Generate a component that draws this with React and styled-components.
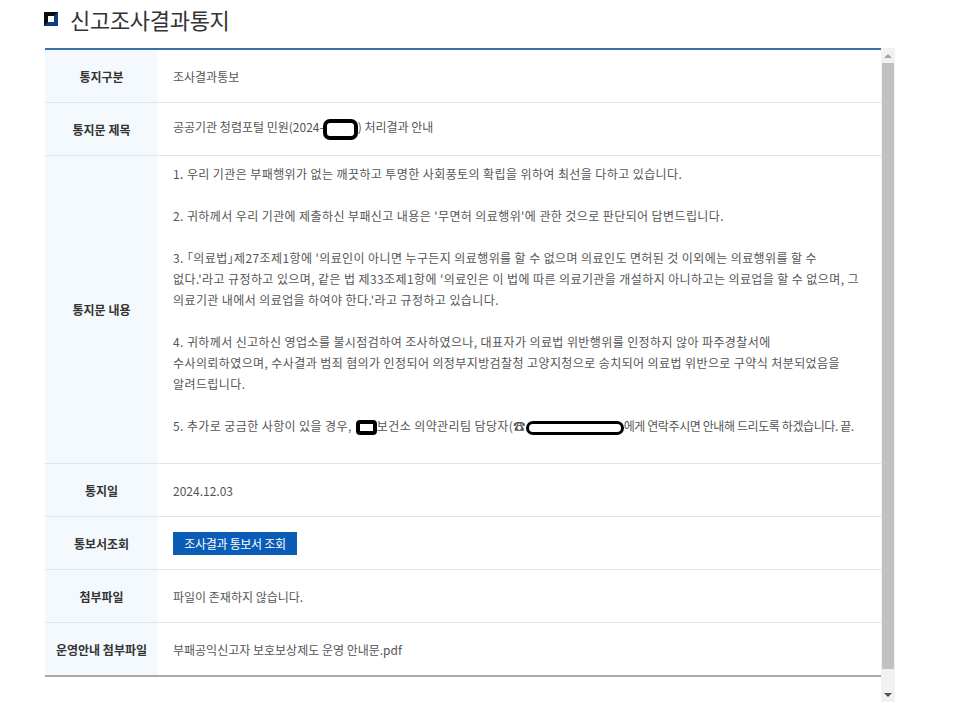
import React from 'react'
import styled, { createGlobalStyle } from 'styled-components'

const GlobalStyle = createGlobalStyle`
  body {
    margin:      0;
    background:  #fff;
    font-family: "Noto Sans CJK KR", "Noto Sans", sans-serif;
    color:       #333;
  }
`

const rows = [
  { label: '통지구분', value: '조사결과통보' },
  { label: '통지문 제목', value: 'title' },
  { label: '통지문 내용', value: 'content' },
  { label: '통지일', value: '2024.12.03' },
  { label: '통보서조회', value: 'button' },
  { label: '첨부파일', value: '파일이 존재하지 않습니다.' },
  { label: '운영안내 첨부파일', value: '부패공익신고자 보호보상제도 운영 안내문.pdf' },
]

const paragraphs = [
  ['1. 우리 기관은 부패행위가 없는 깨끗하고 투명한 사회풍토의 확립을 위하여 최선을 다하고 있습니다.'],
  ["2. 귀하께서 우리 기관에 제출하신 부패신고 내용은 '무면허 의료행위'에 관한 것으로 판단되어 답변드립니다."],
  [
    "3. ｢의료법｣제27조제1항에 '의료인이 아니면 누구든지 의료행위를 할 수 없으며 의료인도 면허된 것 이외에는 의료행위를 할 수",
    "없다.'라고 규정하고 있으며, 같은 법 제33조제1항에 '의료인은 이 법에 따른 의료기관을 개설하지 아니하고는 의료업을 할 수 없으며, 그",
    "의료기관 내에서 의료업을 하여야 한다.'라고 규정하고 있습니다.",
  ],
  [
    '4. 귀하께서 신고하신 영업소를 불시점검하여 조사하였으나, 대표자가 의료법 위반행위를 인정하지 않아 파주경찰서에',
    '수사의뢰하였으며, 수사결과 범죄 혐의가 인정되어 의정부지방검찰청 고양지청으로 송치되어 의료법 위반으로 구약식 처분되었음을',
    '알려드립니다.',
  ],
]

const App = () => {
  const renderValue = (value) => {
    if (value === 'title') {
      return (
        <span>
          공공기관 청렴포털 민원(2024-<Redact $w={35} $h={21} $b={4} $r={7} $ml={-1} />) 처리결과 안내
        </span>
      )
    }
    if (value === 'button') {
      return <ViewButton type="button">조사결과 통보서 조회</ViewButton>
    }
    if (value === 'content') {
      return (
        <Content>
          {paragraphs.map((lines, i) => (
            <Paragraph key={i}>
              {lines.map((line, j) => (
                <Line key={j}>{line}</Line>
              ))}
            </Paragraph>
          ))}
          <Paragraph>
            <Line>
              5. 추가로 궁금한 사항이 있을 경우, <Redact $w={21} $h={15} $b={4} $r={4} $ml={1} />보건소 의약관리팀 담당자(☎<Redact $w={98} $h={14} $b={3} $r={7} $ml={0} />
              <Tail>에게 연락주시면 안내해 드리도록 하겠습니다. 끝.</Tail>
            </Line>
          </Paragraph>
        </Content>
      )
    }
    return value
  }

  return (
    <Page>
      <GlobalStyle />
      <Title>
        <TitleIcon />
        신고조사결과통지
      </Title>
      <Frame>
        <Board>
          {rows.map((row, i) => (
            <Row key={row.label} $last={i === rows.length - 1}>
              <Label>{row.label}</Label>
              <Value $content={row.value === 'content'}>{renderValue(row.value)}</Value>
            </Row>
          ))}
        </Board>
        <Scrollbar>
          <ScrollButton>
            <Arrow $dir="up" />
          </ScrollButton>
          <Track>
            <Thumb />
          </Track>
          <ScrollButton>
            <Arrow $dir="down" />
          </ScrollButton>
        </Scrollbar>
      </Frame>
    </Page>
  )
}

const Page = styled.div`
  padding:          0 0 0 44px;
  width:            851px;
`

const Title = styled.h2`
  display:          flex;
  align-items:      center;
  gap:              12px;
  height:           38px;
  margin:           0 0 10px;
  font-size:        22px;
  font-weight:      400;
  color:            #333;
  letter-spacing:   -0.3px;
`

const TitleIcon = styled.span`
  box-sizing:       border-box;
  width:            14px;
  height:           14px;
  border:           4px solid #0e3f82;
  border-top-color: #0a0a14;
  border-left-color:#0a0a14;
  background:       #fff;
`

const Frame = styled.div`
  display:          flex;
  height:           654px;
  margin-left:      1px;
`

const Board = styled.div`
  flex:             1;
  align-self:       flex-start;
  border-top:       2px solid #3a6faa;
`

const Row = styled.div`
  display:          grid;
  grid-template-columns: 113px 1fr;
  border-bottom:    ${p => (p.$last ? '2px solid #aaa' : '1px solid #e4e4e4')};
`

const Label = styled.div`
  display:          flex;
  align-items:      center;
  justify-content:  center;
  min-height:       52px;
  background:       #f4f9fd;
  font-size:        12px;
  font-weight:      700;
  color:            #333;
  white-space:      nowrap;
`

const Value = styled.div`
  display:          flex;
  align-items:      center;
  padding:          ${p => (p.$content ? '7px 15px 6px' : '0 15px')};
  font-size:        12px;
  color:            #555;
`

const Content = styled.div`
  line-height:      21px;
  padding-bottom:   21px;
  letter-spacing:   0.4px;
`

const Paragraph = styled.div`
  & + & {
    margin-top:     21px;
  }
`

const Line = styled.div`
  white-space:      nowrap;
`

const Tail = styled.span`
  letter-spacing:   -0.4px;
`

const Redact = styled.span`
  display:          inline-block;
  box-sizing:       border-box;
  width:            ${p => p.$w}px;
  height:           ${p => p.$h}px;
  border:           ${p => p.$b}px solid #000;
  border-radius:    ${p => p.$r}px;
  margin-left:      ${p => p.$ml}px;
  vertical-align:   middle;
  background:       #fff;
`

const ViewButton = styled.button`
  height:           23px;
  width:            124px;
  padding:          0;
  border:           0;
  background:       #0b5cb6;
  color:            #fff;
  font-family:      inherit;
  font-size:        12px;
  letter-spacing:   -0.3px;
`

const Scrollbar = styled.div`
  display:          flex;
  flex-direction:   column;
  width:            14px;
  background:       #f1f1f1;
`

const ScrollButton = styled.div`
  display:          flex;
  align-items:      center;
  justify-content:  center;
  height:           15px;
`

const Track = styled.div`
  flex:             1;
  padding:          0 1px 18px;
  display:          flex;
`

const Thumb = styled.div`
  flex:             1;
  background:       #c1c1c1;
`

const Arrow = styled.span`
  width:            0;
  height:           0;
  border-left:      4px solid transparent;
  border-right:     4px solid transparent;
  ${p => (p.$dir === 'up'
    ? 'border-bottom: 4px solid #a3a3a3;'
    : 'border-top: 4px solid #505050;')}
`

export default App
